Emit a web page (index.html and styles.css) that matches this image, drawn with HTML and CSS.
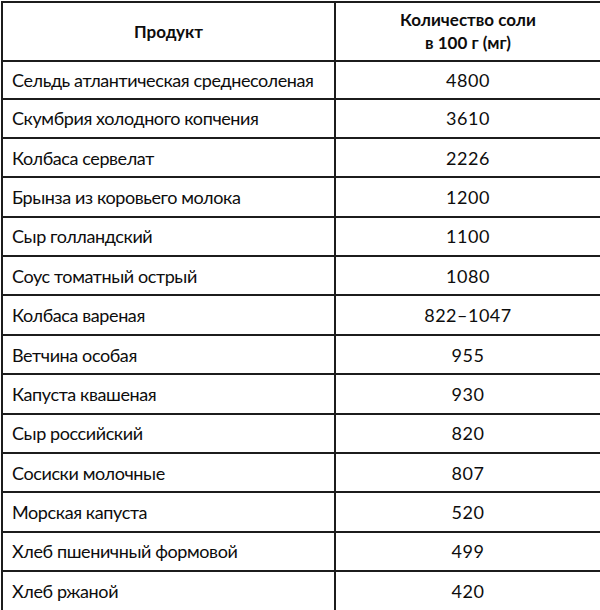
FILE: index.html
```html
<!DOCTYPE html>
<html lang="ru">
<head>
<meta charset="utf-8">
<link rel="stylesheet" href="styles.css">
</head>
<body>
<table class="salt">
  <colgroup><col class="c1"><col class="c2"></colgroup>
  <thead>
    <tr class="head">
      <th class="h-prod">Продукт</th>
      <th class="h-qty">Количество соли<br>в 100 г (мг)</th>
    </tr>
  </thead>
  <tbody>
    <tr class="first"><td>Сельдь атлантическая среднесоленая</td><td class="num">4800</td></tr>
    <tr><td>Скумбрия холодного копчения</td><td class="num">3610</td></tr>
    <tr><td>Колбаса сервелат</td><td class="num">2226</td></tr>
    <tr><td>Брынза из коровьего молока</td><td class="num">1200</td></tr>
    <tr><td>Сыр голландский</td><td class="num">1100</td></tr>
    <tr><td>Соус томатный острый</td><td class="num">1080</td></tr>
    <tr><td>Колбаса вареная</td><td class="num">822–1047</td></tr>
    <tr><td>Ветчина особая</td><td class="num">955</td></tr>
    <tr><td>Капуста квашеная</td><td class="num">930</td></tr>
    <tr><td>Сыр российский</td><td class="num">820</td></tr>
    <tr><td>Сосиски молочные</td><td class="num">807</td></tr>
    <tr><td>Морская капуста</td><td class="num">520</td></tr>
    <tr><td>Хлеб пшеничный формовой</td><td class="num">499</td></tr>
    <tr><td>Хлеб ржаной</td><td class="num">420</td></tr>
  </tbody>
</table>
</body>
</html>
```
FILE: styles.css
```css
html, body {
  margin: 0;
  padding: 0;
  background: #ffffff;
}
body {
  font-family: "Lato", "Noto Sans", sans-serif;
  color: #0d0d0d;
}
.salt {
  border-collapse: collapse;
  width: 600px;
  table-layout: fixed;
  margin-top: 1px;
  margin-left: 1px;
}
.c1 { width: 333px; }
.c2 { width: 266px; }
.salt th,
.salt td {
  border: 2px solid #1c1c1c;
  padding: 0 0 0 9px;
  font-size: 18px;
  line-height: 20px;
  font-weight: 400;
  letter-spacing: -0.4px;
  text-align: left;
  vertical-align: middle;
  white-space: nowrap;
}
.salt th {
  font-weight: 700;
  font-size: 17px;
  line-height: 23px;
  letter-spacing: 0;
  text-align: center;
  padding: 0 0 1px 0;
}
.salt td.num {
  text-align: center;
  letter-spacing: 0.5px;
  padding: 0;
}
.head { height: 59px; }
.salt tbody tr { height: 39.4px; }
.salt tbody tr.first { height: 37.5px; }
```
